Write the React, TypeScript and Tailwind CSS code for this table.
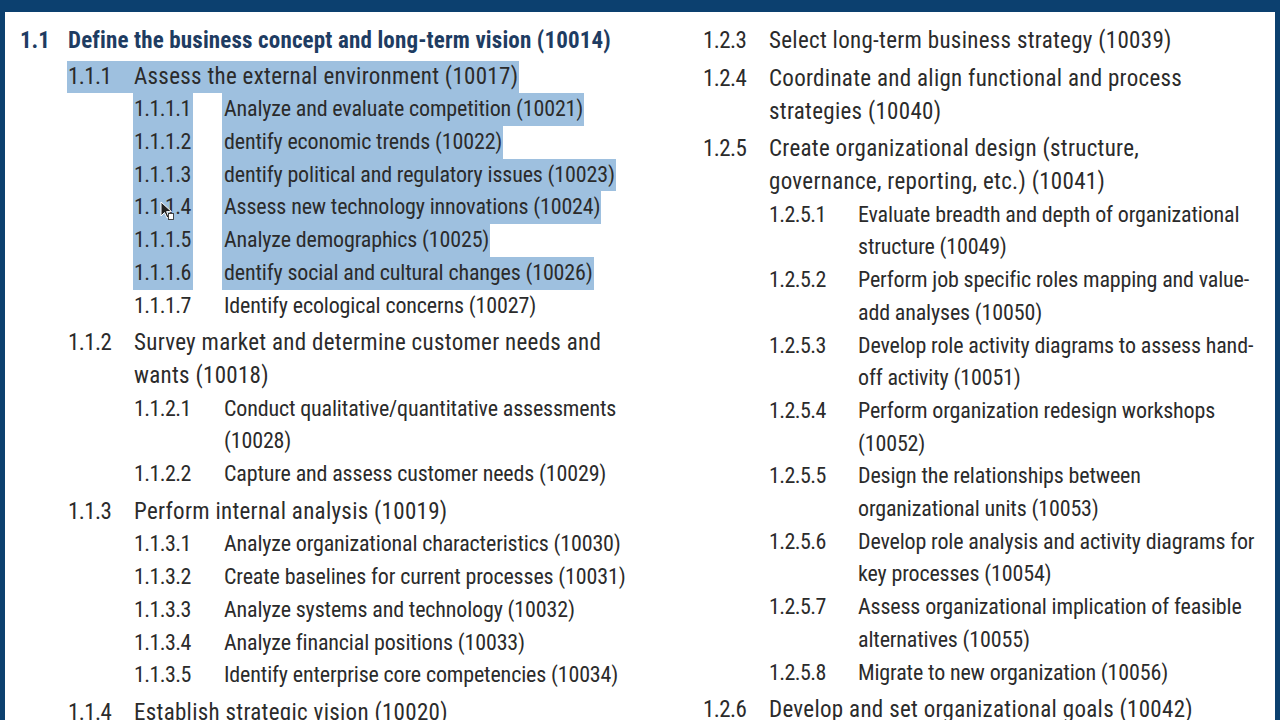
type Item = {
  level: 1 | 2 | 3;
  num: string;
  lines: string[];
  hl?: boolean;
  first?: boolean;
};

const left: Item[] = [
  { level: 1, num: "1.1", lines: ["Define the business concept and long-term vision (10014)"], first: true },
  { level: 2, num: "1.1.1", lines: ["Assess the external environment (10017)"], hl: true, first: true },
  { level: 3, num: "1.1.1.1", lines: ["Analyze and evaluate competition (10021)"], hl: true },
  { level: 3, num: "1.1.1.2", lines: ["dentify economic trends (10022)"], hl: true },
  { level: 3, num: "1.1.1.3", lines: ["dentify political and regulatory issues (10023)"], hl: true },
  { level: 3, num: "1.1.1.4", lines: ["Assess new technology innovations (10024)"], hl: true },
  { level: 3, num: "1.1.1.5", lines: ["Analyze demographics (10025)"], hl: true },
  { level: 3, num: "1.1.1.6", lines: ["dentify social and cultural changes (10026)"], hl: true },
  { level: 3, num: "1.1.1.7", lines: ["Identify ecological concerns (10027)"] },
  { level: 2, num: "1.1.2", lines: ["Survey market and determine customer needs and", "wants (10018)"] },
  { level: 3, num: "1.1.2.1", lines: ["Conduct qualitative/quantitative assessments", "(10028)"] },
  { level: 3, num: "1.1.2.2", lines: ["Capture and assess customer needs (10029)"] },
  { level: 2, num: "1.1.3", lines: ["Perform internal analysis (10019)"] },
  { level: 3, num: "1.1.3.1", lines: ["Analyze organizational characteristics (10030)"] },
  { level: 3, num: "1.1.3.2", lines: ["Create baselines for current processes (10031)"] },
  { level: 3, num: "1.1.3.3", lines: ["Analyze systems and technology (10032)"] },
  { level: 3, num: "1.1.3.4", lines: ["Analyze financial positions (10033)"] },
  { level: 3, num: "1.1.3.5", lines: ["Identify enterprise core competencies (10034)"] },
  { level: 2, num: "1.1.4", lines: ["Establish strategic vision (10020)"] },
];

const right: Item[] = [
  { level: 2, num: "1.2.3", lines: ["Select long-term business strategy (10039)"], first: true },
  { level: 2, num: "1.2.4", lines: ["Coordinate and align functional and process", "strategies (10040)"] },
  { level: 2, num: "1.2.5", lines: ["Create organizational design (structure,", "governance, reporting, etc.) (10041)"] },
  { level: 3, num: "1.2.5.1", lines: ["Evaluate breadth and depth of organizational", "structure (10049)"] },
  { level: 3, num: "1.2.5.2", lines: ["Perform job specific roles mapping and value-", "add analyses (10050)"] },
  { level: 3, num: "1.2.5.3", lines: ["Develop role activity diagrams to assess hand-", "off activity (10051)"] },
  { level: 3, num: "1.2.5.4", lines: ["Perform organization redesign workshops", "(10052)"] },
  { level: 3, num: "1.2.5.5", lines: ["Design the relationships between", "organizational units (10053)"] },
  { level: 3, num: "1.2.5.6", lines: ["Develop role analysis and activity diagrams for", "key processes (10054)"] },
  { level: 3, num: "1.2.5.7", lines: ["Assess organizational implication of feasible", "alternatives (10055)"] },
  { level: 3, num: "1.2.5.8", lines: ["Migrate to new organization (10056)"] },
  { level: 2, num: "1.2.6", lines: ["Develop and set organizational goals (10042)"] },
];

// selection highlight from the pdf viewer
const HL = "bg-[#9ec0df]";
const TXT2 = "tracking-[0.3px]";
const NUM2 = "tracking-[-0.6px]";
const TXT3 = "text-[22px] tracking-[-0.15px]";
const NUM3 = "text-[22px] tracking-[-0.6px]";

function Row({ item, indent }: { item: Item; indent: "left" | "right" }) {
  if (item.level === 1) {
    return (
      <div className="mb-[2.7px] flex font-bold text-[#1e3c62]">
        <div className="w-[48px] shrink-0">{item.num}</div>
        <div className="tracking-[0.15px]">{item.lines[0]}</div>
      </div>
    );
  }

  if (item.level === 2) {
    const pad = indent === "left" ? "ml-[48px]" : "";
    const top = item.first ? "" : "mt-[5px]";
    if (item.hl) {
      return (
        <div className={`flex ${pad} ${top}`}>
          <span className={`-ml-px inline-flex pl-px pr-px ${HL}`}>
            <span className={`w-[66px] shrink-0 ${NUM2}`}>{item.num}</span>
            <span className={TXT2}>{item.lines[0]}</span>
          </span>
        </div>
      );
    }
    return (
      <div className={`flex ${pad} ${top}`}>
        <div className={`w-[66px] shrink-0 ${NUM2}`}>{item.num}</div>
        <div className={TXT2}>
          {item.lines.map((l) => (
            <div key={l}>{l}</div>
          ))}
        </div>
      </div>
    );
  }

  const pad = indent === "left" ? "ml-[114px]" : "ml-[66px]";
  const numW = indent === "left" ? "w-[90px]" : "w-[89px]";
  return (
    <div className={`flex ${pad}`}>
      <div className={`${numW} shrink-0 ${NUM3}`}>
        {item.hl ? (
          <span className={`-ml-px inline-block pl-px pr-[2px] ${HL}`}>{item.num}</span>
        ) : (
          item.num
        )}
      </div>
      <div className={TXT3}>
        {item.hl ? (
          <span className={`-ml-[2px] inline-block pl-[2px] pr-px ${HL}`}>{item.lines[0]}</span>
        ) : (
          item.lines.map((l) => <div key={l}>{l}</div>)
        )}
      </div>
    </div>
  );
}

function Cursor() {
  return (
    <svg className="absolute left-[155px] top-[189px]" width="16" height="20" viewBox="0 0 16 20">
      <path
        d="M1 1 L1 15 L4.5 11.5 L7 17 L9 16 L6.6 10.6 L11.5 10.6 Z"
        fill="#222"
        stroke="#fff"
        strokeWidth="1"
      />
      <rect x="8.5" y="12.5" width="5" height="6" fill="#fff" stroke="#333" strokeWidth="0.9" />
    </svg>
  );
}

export default function App() {
  return (
    <div className="h-screen w-full overflow-hidden bg-[#0c406f] pl-[5px] pr-[5px] pt-[12px]">
      <div className="relative h-full overflow-hidden whitespace-nowrap bg-white pl-[15px] pt-[13.2px] font-['Roboto_Condensed','DejaVu_Sans_Condensed',sans-serif] text-[23px] leading-[32.7px] text-[#2b2b2b]">
        <div className="flex">
          <div className="w-[683px] shrink-0">
            {left.map((it) => (
              <Row key={it.num} item={it} indent="left" />
            ))}
          </div>
          <div className="flex-1">
            {right.map((it) => (
              <Row key={it.num} item={it} indent="right" />
            ))}
          </div>
        </div>
        <Cursor />
      </div>
    </div>
  );
}
